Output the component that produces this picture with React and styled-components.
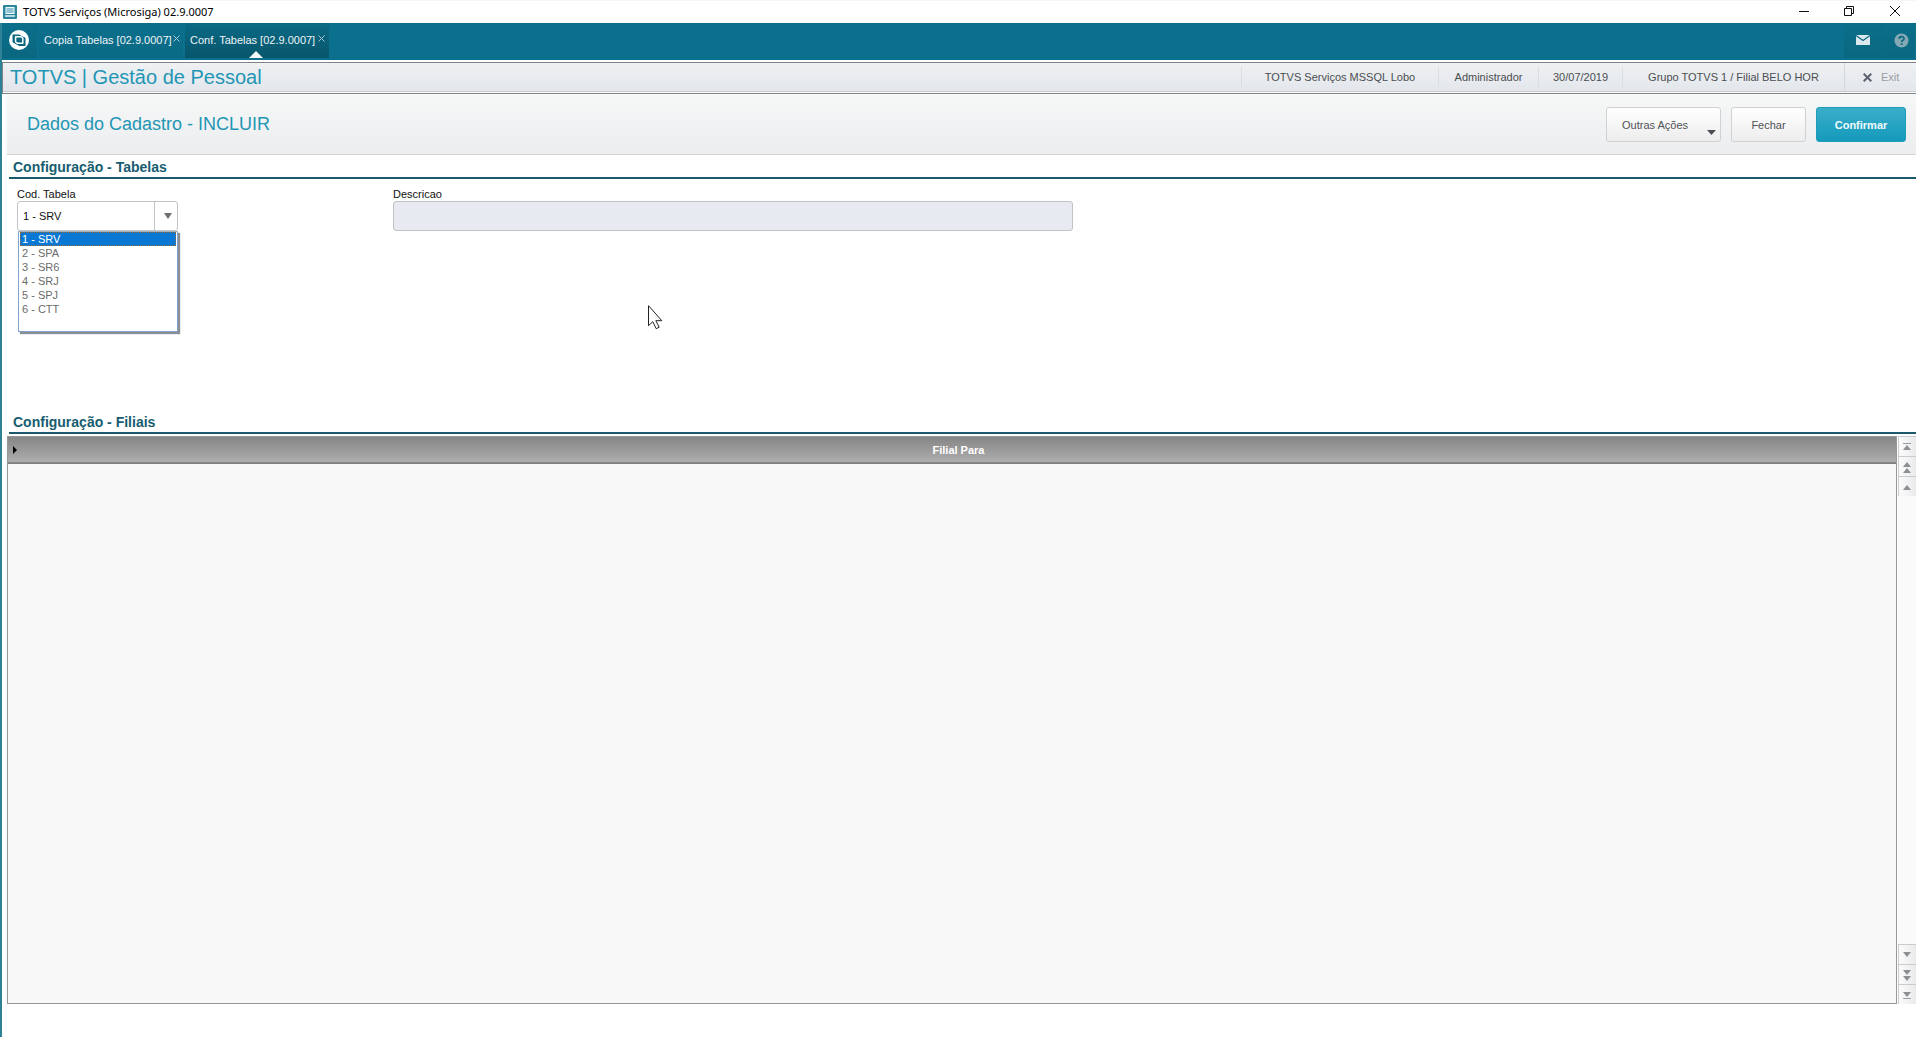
import React, { useState } from "react";
import styled, { createGlobalStyle } from "styled-components";

const GlobalStyle = createGlobalStyle`
  *, *::before, *::after { box-sizing: border-box; }
  body {
    margin: 0;
    background: #fff;
    font-family: "Liberation Sans", Arial, sans-serif;
    font-size: 11px;
    line-height: 14px;
  }
  button, input, select { font: inherit; }
`;

const Window = styled.div`
  display: flex;
  flex-direction: column;
  min-height: 100vh;
`;

const TitleBar = styled.header`
  display: flex;
  align-items: center;
  height: 23px;
  padding: 0 8px 1px 3px;
  border-top: 1px solid #f6f6f6;
`;

const WindowTitle = styled.h1`
  flex: 1;
  margin: 0;
  padding-left: 6px;
  font: 400 11px/16px "Noto Sans", "Open Sans", sans-serif;
  color: #000;
`;

const WindowButton = styled.button`
  display: flex;
  align-items: center;
  justify-content: center;
  width: 45px;
  height: 20px;
  padding: 0 0 1px;
  border: 0;
  background: none;
  &:last-child { width: 27px; margin-left: 10px; }
`;

const Frame = styled.div`
  flex: 1;
  display: flex;
  flex-direction: column;
  border-left: 2px solid #2d8297;
`;

const MenuBar = styled.nav`
  display: flex;
  align-items: stretch;
  height: 37px;
  padding-right: 1px;
  background: #0b708e;
`;

const MenuIcon = styled.button`
  display: flex;
  align-items: center;
  justify-content: center;
  width: ${(p) => p.$width}px;
  height: 35px;
  padding: 0 0 1px ${(p) => p.$inset || 0}px;
  border: 0;
  border-right: 1px solid #0b6a84;
  background: linear-gradient(#0b6f8b, #0a6780);
`;

const Tabs = styled.div`
  flex: 1;
  display: flex;
  gap: 2px;
  padding-left: 2px;
`;

const Tab = styled.div`
  position: relative;
  display: flex;
  align-items: center;
  width: 144px;
  height: 35px;
  padding: 0 3px 2px 5px;
  background: ${(p) => (p.$active ? "linear-gradient(#0a6a85, #07566b)" : "linear-gradient(#0b6f8c, #0a6a85)")};
  &::after {
    content: "";
    display: ${(p) => (p.$active ? "block" : "none")};
    position: absolute;
    left: 64px;
    bottom: 0;
    border: 7px solid transparent;
    border-top: 0;
    border-bottom-color: #f4f7f9;
  }
`;

const TabLink = styled.a`
  flex: 1;
  white-space: nowrap;
  color: #eef5f7;
  text-decoration: none;
`;

const TabClose = styled.button`
  display: flex;
  padding: 0 1px 2px;
  border: 0;
  background: none;
`;

const StatusBar = styled.div`
  display: flex;
  align-items: center;
  height: 32px;
  margin-top: 2px;
  padding-bottom: 2px;
  border: 1px solid #808486;
  border-right: 0;
  background: linear-gradient(#eff1f3, #e2e6eb);
  box-shadow: inset 0 -1px 0 #fafafa, inset 0 -2px 0 #c8cbce;
`;

const Product = styled.h2`
  flex: 1;
  margin: 0;
  padding: 0 0 0 7px;
  font-size: 20px;
  font-weight: 400;
  line-height: 24px;
  color: #1f96b4;
`;

const StatusItem = styled.span`
  display: flex;
  align-items: center;
  justify-content: center;
  width: ${(p) => p.$width}px;
  height: 20px;
  border-left: 1px solid #d9dde1;
  color: #4b4d50;
  white-space: nowrap;
`;

const ExitButton = styled.button`
  display: flex;
  align-items: center;
  gap: 9px;
  width: 72px;
  height: 28px;
  padding: 0 0 0 18px;
  border: 0;
  border-left: 1px solid #d4d8dc;
  background: none;
  color: #9a9da1;
`;

const Content = styled.main`
  flex: 1;
  display: flex;
  flex-direction: column;
  padding: 0 0 33px 5px;
`;

const ActionBar = styled.div`
  display: flex;
  align-items: center;
  gap: 10px;
  height: 61px;
  padding: 0 10px 0 20px;
  border-bottom: 1px solid #d2d4d5;
  background: linear-gradient(#f6f7f7, #ecedef);
`;

const ActionTitle = styled.h3`
  flex: 1;
  margin: 0;
  font-size: 18px;
  font-weight: 400;
  line-height: 22px;
  color: #1f96b4;
`;

const Button = styled.button`
  display: flex;
  align-items: center;
  justify-content: ${(p) => (p.$menu ? "space-between" : "center")};
  width: ${(p) => p.$width}px;
  height: 35px;
  padding: ${(p) => (p.$menu ? "2px 4px 0 15px" : "2px 0 0")};
  border: 1px solid ${(p) => (p.$primary ? "#1c9dbc" : "#cfd1d2")};
  border-radius: 3px;
  background: ${(p) => (p.$primary ? "linear-gradient(#3aaecb, #149abb)" : "linear-gradient(#ffffff, #ededee)")};
  color: ${(p) => (p.$primary ? "#f2fbfd" : "#505256")};
  font-weight: ${(p) => (p.$primary ? 700 : 400)};
`;

const Caret = styled.svg`
  align-self: flex-end;
  margin-bottom: 6px;
`;

const Section = styled.section`
  display: flex;
  flex-direction: column;
  flex: ${(p) => (p.$grow ? "1" : "none")};
  min-height: ${(p) => (p.$grow ? "0" : "255px")};
`;

const SectionTitle = styled.h4`
  margin: 0 0 0 2px;
  padding: 4px 4px 2px;
  border-bottom: 2px solid #1b5a6a;
  font-size: 14px;
  line-height: 16px;
  color: #175c70;
`;

const Fields = styled.div`
  display: grid;
  grid-template-columns: 366px 680px;
  column-gap: 10px;
  padding: 9px 10px 0;
`;

const Field = styled.div`
  position: relative;
`;

const Label = styled.label`
  display: block;
  height: 13px;
  line-height: 13px;
  color: #111;
`;

const Combo = styled.div`
  display: flex;
  width: 161px;
  height: 30px;
  border: 1px solid #c2c4c6;
  border-radius: 3px;
`;

const Select = styled.select`
  flex: 1;
  appearance: none;
  min-width: 0;
  padding: 0 5px;
  border: 0;
  background: none;
  color: #111;
  outline: none;
`;

const ComboArrow = styled.span`
  display: flex;
  align-items: center;
  justify-content: center;
  width: 23px;
  padding-left: 4px;
  border-left: 1px solid #c2c4c6;
`;

const Options = styled.ul`
  position: absolute;
  top: 43px;
  left: 1px;
  width: 160px;
  height: 101px;
  margin: 0;
  padding: 0 1px;
  list-style: none;
  border: 1px solid #7fa3cf;
  border-top-color: #a9b2ba;
  background: #fff;
  box-shadow: 2px 2px 1px #8b8f94;
`;

const Option = styled.li`
  padding: 0 2px;
  line-height: 14px;
  color: ${(p) => (p.$selected ? "#fff" : "#6b6b6b")};
  background: ${(p) => (p.$selected ? "#0878d4" : "transparent")};
  outline: ${(p) => (p.$selected ? "1px dotted #8a6a3a" : "none")};
  outline-offset: -1px;
`;

const TextInput = styled.input`
  display: block;
  width: 100%;
  height: 30px;
  padding: 0 6px;
  border: 1px solid #c0c3c6;
  border-radius: 3px;
  background: #e7eaf1;
`;

const GridArea = styled.div`
  flex: 1;
  display: flex;
  gap: 1px;
  padding-top: 2px;
`;

const GridBox = styled.div`
  flex: 1;
  border: 1px solid #979797;
  background: #f8f8f8;
`;

const Table = styled.table`
  width: 100%;
  border-collapse: collapse;
`;

const HeadRow = styled.tr`
  height: 26px;
  background: linear-gradient(#868686, #adadad);
  border-bottom: 1px solid #7f7f7f;
`;

const HeadCell = styled.th`
  padding: 0 0 0 5px;
  color: #fff;
`;

const HeadContent = styled.span`
  display: flex;
  align-items: center;
  gap: 4px;
`;

const HeadLabel = styled.span`
  flex: 1;
`;

const ScrollRail = styled.div`
  display: flex;
  flex-direction: column;
  justify-content: space-between;
  width: 18px;
  background: #fafafb;
`;

const ScrollButton = styled.button`
  display: flex;
  align-items: center;
  justify-content: center;
  width: 18px;
  height: 20px;
  padding: 0 2px 0 0;
  border: solid #c9cbcd;
  border-width: 1px 0 0 1px;
  background: linear-gradient(90deg, #fbfbfb, #e9eaec);
`;

const Pointer = styled.svg`
  position: absolute;
  left: 648px;
  top: 305px;
  pointer-events: none;
`;

const items = ["1 - SRV", "2 - SPA", "3 - SR6", "4 - SRJ", "5 - SPJ", "6 - CTT"];

const status = [
  ["TOTVS Serviços MSSQL Lobo", 197],
  ["Administrador", 100],
  ["30/07/2019", 84],
  ["Grupo TOTVS 1 / Filial BELO HOR", 222],
];

const arrows = {
  first: ["Início", "M1 1.5h8", "M5 3l4 5H1z"],
  pageUp: ["Página anterior", "", "M5 0l4 5H1zM5 6l4 5H1z"],
  up: ["Linha anterior", "", "M5 3l4 5H1z"],
  down: ["Próxima linha", "", "M5 7l4-5H1z"],
  pageDown: ["Próxima página", "", "M5 5l4-5H1zM5 11l4-5H1z"],
  last: ["Fim", "M1 8.5h8", "M5 7l4-5H1z"],
};

function Arrow({ kind }) {
  const [name, line, shape] = arrows[kind];
  return (
    <ScrollButton type="button" aria-label={name}>
      <svg width="10" height="10" overflow="visible">
        <path d={shape} fill="#8d8f91" />
        {line && <path d={line} stroke="#9a9da0" />}
      </svg>
    </ScrollButton>
  );
}

function TabItem({ label, active }) {
  return (
    <Tab $active={active}>
      <TabLink href="#" aria-current={active ? "page" : undefined}>{label}</TabLink>
      <TabClose type="button" aria-label={`Fechar ${label}`}>
        <svg width="7" height="7"><path d="M.5.5l6 6M6.500.5l-6 6" stroke="#a9cbd5" /></svg>
      </TabClose>
    </Tab>
  );
}

export default function App() {
  const [value, setValue] = useState(items[0]);
  return (
    <Window>
      <GlobalStyle />
      <TitleBar>
        <svg width="14" height="14" viewBox="0 0 14 14">
          <rect width="14" height="14" rx="1" fill="#2c86a0" />
          <rect x="3" y="2.500" width="8" height="6" fill="#8fc3d3" stroke="#f2fafc" />
          <path d="M2 11h10" stroke="#e6f3f7" strokeWidth="1.500" />
        </svg>
        <WindowTitle>TOTVS Serviços (Microsiga) 02.9.0007</WindowTitle>
        <WindowButton type="button" aria-label="Minimizar">
          <svg width="10" height="10"><path d="M0 5.500h10" stroke="#111" /></svg>
        </WindowButton>
        <WindowButton type="button" aria-label="Restaurar">
          <svg width="10" height="10" fill="none" stroke="#111"><path d="M.5 2.500h7v7h-7zM2.500 2.500v-2h7v7h-2" /></svg>
        </WindowButton>
        <WindowButton type="button" aria-label="Fechar janela">
          <svg width="10" height="10"><path d="M0 0l10 10M10 0L0 10" stroke="#111" /></svg>
        </WindowButton>
      </TitleBar>
      <Frame>
        <MenuBar>
          <MenuIcon type="button" aria-label="TOTVS" $width={35}>
            <svg width="20" height="20" viewBox="0 0 20 20">
              <circle cx="10" cy="10" r="10" fill="#fff" />
              <path d="M3.500 4.500h6.500l6.500 3.200v8.300H10L3.500 12.600z" fill="#0b6680" />
              <path d="M6.600 6.800h5.600l1.600 1.200v5.200H8.200L6.600 12z" fill="#0b6680" stroke="#fff" strokeWidth="1.500" strokeLinejoin="round" />
              <path d="M3 12.800L9.500 16.500M10.500 3.800l6.500 3.500" stroke="#fff" strokeWidth="1.200" />
            </svg>
          </MenuIcon>
          <Tabs>
            <TabItem label="Copia Tabelas [02.9.0007]" />
            <TabItem label="Conf. Tabelas [02.9.0007]" active />
          </Tabs>
          <MenuIcon type="button" aria-label="Mensagens" $width={37} $inset={2}>
            <svg width="14" height="10" viewBox="0 0 14 10">
              <rect width="14" height="10" fill="#dbe9ee" />
              <path d="M0 .5l7 5 7-5" fill="none" stroke="#0b6680" strokeWidth="1.200" />
            </svg>
          </MenuIcon>
          <MenuIcon type="button" aria-label="Ajuda" $width={34} $inset={7}>
            <svg width="15" height="15" viewBox="0 0 15 15">
              <circle cx="7.500" cy="7.500" r="7" fill="#84a9b4" />
              <path d="M5.200 6c0-3 4.800-3 4.800-.3 0 1.700-2.300 1.500-2.300 3.300M7.700 10.200v1.800" fill="none" stroke="#0b6680" strokeWidth="1.700" />
            </svg>
          </MenuIcon>
        </MenuBar>
        <StatusBar>
          <Product>TOTVS | Gestão de Pessoal</Product>
          {status.map(([text, width]) => <StatusItem key={text} $width={width}>{text}</StatusItem>)}
          <ExitButton type="button">
            <svg width="9" height="9"><path d="M.7.7l7.600 7.600M8.300.7L.7 8.300" stroke="#5d6270" strokeWidth="2" /></svg>
            Exit
          </ExitButton>
        </StatusBar>
        <Content>
          <ActionBar>
            <ActionTitle>Dados do Cadastro - INCLUIR</ActionTitle>
            <Button type="button" $width={115} $menu>
              Outras Ações
              <Caret width="9" height="5"><path d="M0 0h9L4.500 5z" fill="#4b4d52" /></Caret>
            </Button>
            <Button type="button" $width={75}>Fechar</Button>
            <Button type="button" $width={90} $primary>Confirmar</Button>
          </ActionBar>
          <Section>
            <SectionTitle>Configuração - Tabelas</SectionTitle>
            <Fields>
              <Field>
                <Label htmlFor="cod">Cod. Tabela</Label>
                <Combo>
                  <Select id="cod" value={value} onChange={(e) => setValue(e.target.value)}>
                    {items.map((item) => <option key={item}>{item}</option>)}
                  </Select>
                  <ComboArrow aria-hidden="true">
                    <svg width="8" height="6"><path d="M0 0h8L4 6z" fill="#6c6e71" /></svg>
                  </ComboArrow>
                </Combo>
                <Options role="listbox" aria-label="Cod. Tabela">
                  {items.map((item) => (
                    <Option key={item} role="option" aria-selected={item === value} $selected={item === value} onClick={() => setValue(item)}>
                      {item}
                    </Option>
                  ))}
                </Options>
              </Field>
              <Field>
                <Label htmlFor="desc">Descricao</Label>
                <TextInput id="desc" readOnly />
              </Field>
            </Fields>
          </Section>
          <Section $grow>
            <SectionTitle>Configuração - Filiais</SectionTitle>
            <GridArea>
              <GridBox>
                <Table>
                  <thead>
                    <HeadRow>
                      <HeadCell scope="col">
                        <HeadContent>
                          <svg width="4" height="8"><path d="M0 0l4 4-4 4z" fill="#000" /></svg>
                          <HeadLabel>Filial Para</HeadLabel>
                        </HeadContent>
                      </HeadCell>
                    </HeadRow>
                  </thead>
                </Table>
              </GridBox>
              <ScrollRail>
                <div><Arrow kind="first" /><Arrow kind="pageUp" /><Arrow kind="up" /></div>
                <div><Arrow kind="down" /><Arrow kind="pageDown" /><Arrow kind="last" /></div>
              </ScrollRail>
            </GridArea>
          </Section>
        </Content>
      </Frame>
      <Pointer width="16" height="25" viewBox="0 0 16 25">
        <path d="M.5.700v20l4.300-4 3.400 7 3-1.500-3.400-6.500h6z" fill="#fff" stroke="#222" />
      </Pointer>
    </Window>
  );
}
